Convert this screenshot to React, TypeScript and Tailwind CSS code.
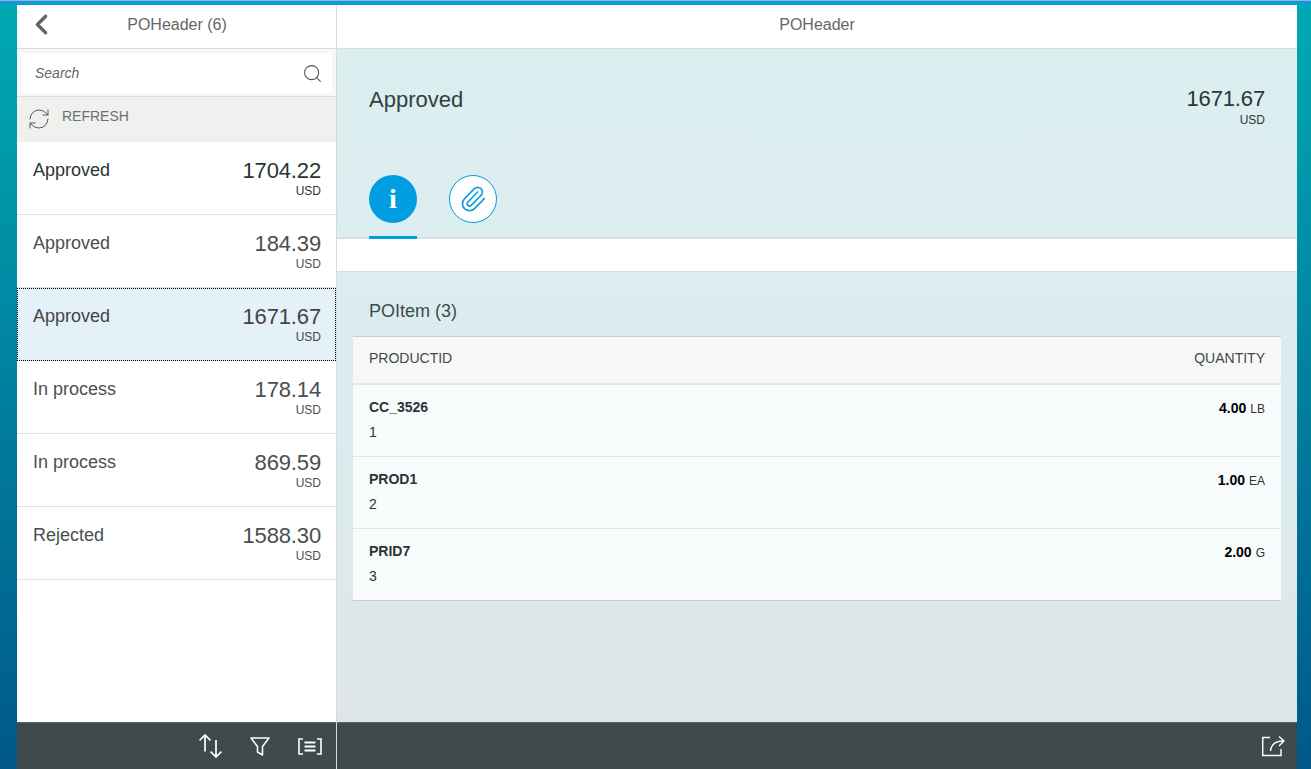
import React from 'react';
import { ChevronLeft, Search, RefreshCw, Paperclip } from 'lucide-react';

const orders = [
  { status: 'Approved', amount: '1704.22', dark: true },
  { status: 'Approved', amount: '184.39' },
  { status: 'Approved', amount: '1671.67', selected: true },
  { status: 'In process', amount: '178.14' },
  { status: 'In process', amount: '869.59' },
  { status: 'Rejected', amount: '1588.30' },
];

const items = [
  { id: 'CC_3526', pos: '1', qty: '4.00', unit: 'LB' },
  { id: 'PROD1', pos: '2', qty: '1.00', unit: 'EA' },
  { id: 'PRID7', pos: '3', qty: '2.00', unit: 'G' },
];

export default function App() {
  return (
    <div className="h-[769px] overflow-hidden flex flex-col bg-gradient-to-b from-[#00aab2] to-[#00588a] font-['Liberation_Sans',Arial,sans-serif] text-[#333f41]">
      <div className="h-[5px] shrink-0 bg-[#0a9bdc] border-t border-[#9fb4bd]" />
      <div className="ml-[17px] mr-[14px] flex-1 min-h-0 flex">
        {/* Master list */}
        <div className="w-[320px] shrink-0 flex flex-col bg-white border-r border-[#d9d9d9]">
          <div className="h-[44px] shrink-0 flex items-center border-b border-[#dcdcdc] relative pb-[4px]">
            <ChevronLeft size={33} strokeWidth={2.4} className="ml-[8px] text-[#5e6566]" />
            <div className="absolute inset-x-0 pl-[1px] text-center text-[16px] text-[#666]">POHeader (6)</div>
          </div>
          <div className="h-[48px] shrink-0 bg-[#f7f7f7] border-b border-[#dcdcdc] p-[4px] pb-[3px]">
            <div className="h-[40px] bg-white flex items-center justify-between pl-[14px] pr-[9px]">
              <span className="text-[14px] italic text-[#666]">Search</span>
              <Search size={21} strokeWidth={1.2} className="text-[#555]" />
            </div>
          </div>
          <div className="h-[45px] shrink-0 bg-[#f0f0ef] flex items-center pl-[10px] gap-[11px] pb-[2px]">
            <RefreshCw size={24} strokeWidth={1} className="text-[#555]" />
            <span className="text-[14px] text-[#6a7173] -mt-[4px]">REFRESH</span>
          </div>
          <div className="flex-1 min-h-0">
            {orders.map((o, i) => (
              <div
                key={i}
                className={
                  o.selected
                    ? 'h-[73px] flex justify-between pl-[15px] pr-[14px] pt-[15px] bg-[#e4f1f9] border border-dotted border-black text-[#444]'
                    : 'h-[73px] flex justify-between pl-[16px] pr-[15px] pt-[16px] border-b border-[#e2e2e2] ' + (o.dark ? 'text-[#2b3537]' : 'text-[#4a4f50]')
                }
              >
                <div className="text-[18px] leading-[24px]">{o.status}</div>
                <div className="text-right">
                  <div className="text-[22px] leading-[26px] tracking-[-0.15px]">{o.amount}</div>
                  <div className="text-[12px] leading-[14px]">USD</div>
                </div>
              </div>
            ))}
          </div>
          <div className="h-[47px] shrink-0 bg-[#3f4a4c] border-t border-[#59625f] flex items-center justify-end pr-[14px] gap-[28px] text-white">
            <svg width="23" height="24" viewBox="0 0 23 24" fill="none" stroke="currentColor" strokeWidth="1.7">
              <path d="M6 1V17.500M.6 6.400L6 1l5.400 5.400" />
              <path d="M17 6V23M11.600 17.600L17 23l5.400-5.400" />
            </svg>
            <svg width="20" height="19" viewBox="0 0 20 19" fill="none" stroke="currentColor" strokeWidth="1.500">
              <path d="M1 1H19L12.500 9.500V18L7.500 15V9.500Z" strokeLinejoin="round" />
            </svg>
            <svg width="24" height="17" viewBox="0 0 24 17" fill="none" stroke="currentColor" strokeWidth="1.600">
              <path d="M5 1H1v15h4M19 1h4v15h-4" />
              <path d="M6.500 4.500h11M6.500 8.500h11M6.500 12.500h11" strokeWidth="2" />
            </svg>
          </div>
        </div>

        {/* Detail page */}
        <div className="flex-1 min-w-0 flex flex-col bg-gradient-to-b from-[#dceff0] via-[#dbecf0] via-50% to-[#dfe5e8]">
          <div className="h-[44px] shrink-0 bg-white border-b border-[#dcdcdc] flex items-center justify-center pb-[4px] text-[16px] text-[#666]">
            POHeader
          </div>
          <div className="h-[190px] shrink-0 border-b-2 border-[#dcdcdc] px-[32px] flex flex-col">
            <div className="flex justify-between pt-[38px]">
              <div className="text-[22px] leading-[26px]">Approved</div>
              <div className="text-right text-[#2b3537]">
                <div className="text-[22px] leading-[26px] -mt-[1px] tracking-[-0.15px]">1671.67</div>
                <div className="text-[12px] leading-[14px] mt-[1px]">USD</div>
              </div>
            </div>
            <div className="flex gap-[32px] mt-[48px]">
              <div className="w-[48px] h-[64px] border-b-[3px] border-[#009de0]">
                <div className="w-[48px] h-[48px] rounded-full bg-[#009de0] flex items-center justify-center text-white text-[28px] leading-none font-bold font-['Liberation_Serif',serif]">
                  i
                </div>
              </div>
              <div className="w-[48px] h-[48px] rounded-full bg-white border border-[#009de0] flex items-center justify-center">
                <Paperclip size={28} strokeWidth={1.5} className="text-[#1a9fdc]" />
              </div>
            </div>
          </div>
          <div className="h-[33px] shrink-0 bg-white border-b border-[#dcdcdc]" />
          <div className="flex-1 min-h-0 px-[16px]">
            <div className="h-[64px] flex items-end pb-[13px] pl-[16px] text-[18px] leading-[24px] text-[#3f4a4c]">POItem (3)</div>
            <div className="border-t border-[#c9cfcf] border-b">
              <div className="h-[48px] bg-[#f7f7f7] border-b-2 border-[#e5e5e5] flex items-center justify-between px-[16px] pb-[4px] text-[14px] text-[#3f4a4c]">
                <span>PRODUCTID</span>
                <span>QUANTITY</span>
              </div>
              {items.map((it, i) => (
                <div
                  key={it.id}
                  className={'bg-[#f7fbfc] flex justify-between px-[16px] pt-[14px] ' + (i < items.length - 1 ? 'h-[72px] border-b border-[#e3e5e5]' : 'h-[71px]')}
                >
                  <div className="text-[14px] leading-[16px] text-[#2b3537]">
                    <div className="font-bold">{it.id}</div>
                    <div className="mt-[9px]">{it.pos}</div>
                  </div>
                  <div className="text-[14px] leading-[16px] mt-[1px] text-black">
                    <span className="font-bold">{it.qty}</span>
                    <span className="text-[12px] ml-[4px] text-[#333]">{it.unit}</span>
                  </div>
                </div>
              ))}
            </div>
          </div>
          <div className="h-[47px] shrink-0 bg-[#3f4a4c] border-t border-[#59625f] flex items-center justify-end pr-[12px] text-white">
            <svg width="23" height="21" viewBox="0 0 23 21" fill="none" stroke="currentColor" strokeWidth="1.400">
              <path d="M8 1.500H.75V19.500H19V13" />
              <path d="M8.500 15C9 9 13 5 21.500 5M17 .5L22 5l-5 5" />
            </svg>
          </div>
        </div>
      </div>
    </div>
  );
}
